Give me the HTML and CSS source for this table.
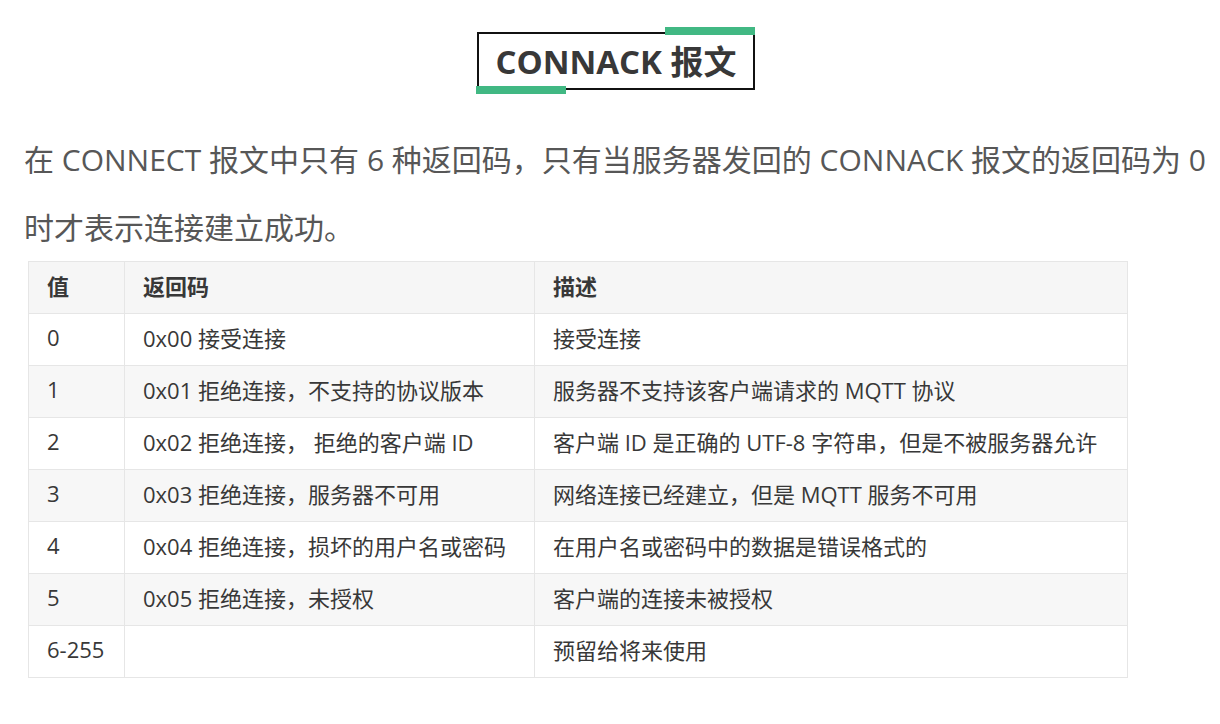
FILE: index.html
```html
<!DOCTYPE html>
<html lang="zh-CN">
<head>
<meta charset="utf-8">
<title>CONNACK 报文</title>
<link rel="stylesheet" href="styles.css">
</head>
<body>
<div class="page">
  <div class="title-wrap">
    <h2 class="title">CONNACK 报文</h2>
  </div>
  <p class="intro">在 CONNECT 报文中只有 6 种返回码，只有当服务器发回的 CONNACK 报文的返回码为 0 时才表示连接建立成功。</p>
  <table class="codes">
    <thead>
      <tr><th class="c1">值</th><th class="c2">返回码</th><th class="c3">描述</th></tr>
    </thead>
    <tbody>
      <tr><td>0</td><td>0x00 接受连接</td><td>接受连接</td></tr>
      <tr><td>1</td><td>0x01 拒绝连接，不支持的协议版本</td><td>服务器不支持该客户端请求的 MQTT 协议</td></tr>
      <tr><td>2</td><td>0x02 拒绝连接， 拒绝的客户端 ID</td><td>客户端 ID 是正确的 UTF-8 字符串，但是不被服务器允许</td></tr>
      <tr><td>3</td><td>0x03 拒绝连接，服务器不可用</td><td>网络连接已经建立，但是 MQTT 服务不可用</td></tr>
      <tr><td>4</td><td>0x04 拒绝连接，损坏的用户名或密码</td><td>在用户名或密码中的数据是错误格式的</td></tr>
      <tr><td>5</td><td>0x05 拒绝连接，未授权</td><td>客户端的连接未被授权</td></tr>
      <tr><td>6-255</td><td></td><td>预留给将来使用</td></tr>
    </tbody>
  </table>
</div>
</body>
</html>
```

FILE: styles.css
```css
html, body {
  margin: 0;
  padding: 0;
  background: #ffffff;
}

.page {
  padding: 32px 0 0 24px;
  width: 1190px;
  font-family: "Open Sans", "Noto Sans CJK SC", sans-serif;
}

.title-wrap {
  display: flex;
  justify-content: center;
  padding-right: 6px;
}

.title {
  position: relative;
  margin: 0;
  box-sizing: border-box;
  width: 278px;
  height: 58px;
  border: 2px solid #111;
  display: flex;
  align-items: center;
  justify-content: center;
  padding-bottom: 2px;
  font-size: 33px;
  font-weight: 700;
  color: #383838;
}

.title::before,
.title::after {
  content: "";
  position: absolute;
  width: 90px;
  height: 8px;
  background: #41b883;
}

.title::before {
  top: -7px;
  right: -2px;
}

.title::after {
  bottom: -6px;
  left: -3px;
}

.intro {
  margin: 36px 0 0 0;
  font-size: 30px;
  line-height: 68px;
  color: #575757;
}

.codes {
  margin: -1px 0 0 4px;
  width: 1100px;
  border-collapse: collapse;
  border: 1px solid #e2e2e2;
  font-size: 22px;
  color: #383838;
}

.codes th,
.codes td {
  height: 52px;
  padding: 0 18px 5px 18px;
  border: 1px solid #e6e6e6;
  text-align: left;
  vertical-align: middle;
  box-sizing: border-box;
}

.codes th {
  font-weight: 600;
  background: #f6f6f6;
}

.codes .c1 { width: 96px; }
.codes .c2 { width: 410px; }

.codes tbody tr:nth-child(even) td {
  background: #f7f7f7;
}
```
